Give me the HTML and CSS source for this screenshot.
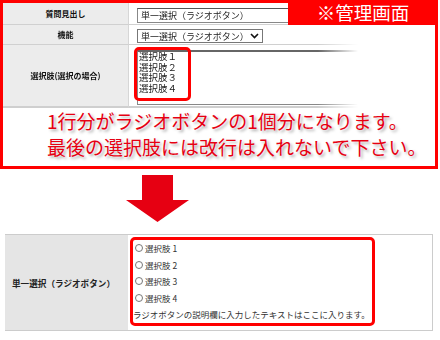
FILE: index.html
```html
<!DOCTYPE html>
<html lang="ja">
<head>
    <meta charset="UTF-8">
    <meta name="viewport" content="width=device-width, initial-scale=1.0">
    <title>単一選択（ラジオボタン）</title>
    <link rel="stylesheet" href="styles.css">
</head>
<body>
    <div class="admin">
        <div class="form">
            <div class="label">質問見出し</div>
            <div class="field">
                <div class="input">単一選択（ラジオボタン）</div>
            </div>
            <div class="label">機能</div>
            <div class="field">
                <div class="select">
                    <span>単一選択（ラジオボタン）</span>
                    <svg width="9" height="6" viewBox="0 0 9 6"><path d="M1 1 L4.5 4.5 L8 1" fill="none" stroke="#111" stroke-width="1.6"/></svg>
                </div>
            </div>
            <div class="label last">選択肢(選択の場合)</div>
            <div class="field last">
                <div class="textarea">
                    選択肢１<br>選択肢２<br>選択肢３<br>選択肢４
                    <div class="mark"></div>
                </div>
            </div>
        </div>
        <div class="badge">※管理画面</div>
        <p class="note">1行分がラジオボタンの1個分になります。<br>最後の選択肢には改行は入れないで下さい。</p>
    </div>

    <svg class="arrow" width="63" height="47" viewBox="0 0 63 47">
        <polygon points="16,0 47,0 47,25 63,25 31.5,47 0,25 16,25" fill="#e60012"/>
    </svg>

    <div class="preview">
        <div class="preview-label">単一選択（ラジオボタン）</div>
        <div class="preview-field">
            <div class="choices">
                <div class="opt"><span class="radio"></span>選択肢 1</div>
                <div class="opt"><span class="radio"></span>選択肢 2</div>
                <div class="opt"><span class="radio"></span>選択肢 3</div>
                <div class="opt"><span class="radio"></span>選択肢 4</div>
                <div class="desc">ラジオボタンの説明欄に入力したテキストはここに入ります。</div>
            </div>
        </div>
    </div>
</body>
</html>
```

FILE: styles.css
```css
body {
    margin: 0;
    font-family: "Noto Sans CJK JP", sans-serif;
    background-color: #fff;
    color: #222;
}

.admin {
    position: relative;
    width: 432px;
    height: 163px;
    border: 3px solid #ff0000;
}

.form {
    display: grid;
    grid-template-columns: 126px 1fr;
    grid-template-rows: 22px 20px 63px;
    -webkit-mask-image: linear-gradient(to right, #000 315px, transparent 355px);
    mask-image: linear-gradient(to right, #000 315px, transparent 355px);
}

.form .label {
    display: flex;
    align-items: center;
    justify-content: center;
    background-color: #ececec;
    border-right: 1px solid #d6d6d6;
    border-bottom: 1px solid #d0d0d0;
    font-size: 8px;
    font-weight: bold;
    color: #111;
}

.form .field {
    padding-left: 8px;
    border-bottom: 1px solid #d0d0d0;
}

.form .last {
    border-bottom: 2px solid #cfcfcf;
}

.input {
    width: 300px;
    height: 15px;
    margin-top: 5px;
    box-sizing: border-box;
    border: 1px solid #888;
    border-top-color: #555;
    padding-left: 3px;
    font-size: 9px;
    line-height: 13px;
    white-space: nowrap;
    overflow: hidden;
}

.select {
    display: flex;
    align-items: center;
    justify-content: space-between;
    width: 126px;
    height: 14px;
    margin-top: 4px;
    box-sizing: border-box;
    border: 1px solid #777;
    padding: 0 3px 0 3px;
    font-size: 9px;
    white-space: nowrap;
}

.textarea {
    position: relative;
    width: 240px;
    height: 55px;
    margin-top: 5px;
    box-sizing: border-box;
    border: 1px solid #888;
    border-top: 2px solid #666;
    padding-left: 1px;
    font-family: "Liberation Sans", "Noto Sans CJK JP", sans-serif;
    font-size: 9.5px;
    line-height: 10.5px;
}

.mark {
    position: absolute;
    left: -4px;
    top: -5px;
    width: 57px;
    height: 54px;
    box-sizing: border-box;
    border: 3px solid #ff0000;
    border-radius: 5px;
}

.badge {
    position: absolute;
    top: -3px;
    right: -3px;
    width: 150px;
    height: 25px;
    background-color: #ff0000;
    color: #fff;
    font-size: 18.5px;
    line-height: 25px;
    text-align: center;
}

.note {
    margin: 0;
    padding-left: 44px;
    font-size: 19px;
    line-height: 26px;
    color: #e60012;
    text-shadow: 0 0 2px #fff, 2px 2px 3px rgba(0, 0, 0, 0.35);
}

.arrow {
    display: block;
    margin: 6px 0 0 126px;
}

.preview {
    display: grid;
    grid-template-columns: 123px 1fr;
    width: 428px;
    margin: 12px 0 0 5px;
    box-sizing: border-box;
    border-top: 1px solid #ccc;
    border-bottom: 1px solid #ccc;
    border-right: 1px solid #ccc;
}

.preview-label {
    display: flex;
    align-items: center;
    justify-content: center;
    padding-right: 6px;
    background-color: #e5e5e5;
    font-size: 8.6px;
    font-weight: bold;
    color: #222;
}

.preview-field {
    padding: 2px 0 4px 2px;
}

.choices {
    width: 245px;
    height: 89px;
    box-sizing: border-box;
    border: 3px solid #ff0000;
    border-radius: 5px;
}

.opt {
    display: flex;
    align-items: center;
    height: 16.5px;
    padding-left: 2px;
    font-size: 8.5px;
    color: #333;
}

.radio {
    width: 8px;
    height: 8px;
    margin-right: 2px;
    box-sizing: border-box;
    border: 1px solid #777;
    border-radius: 50%;
}

.desc {
    font-size: 8.5px;
    line-height: 16.5px;
    color: #333;
    white-space: nowrap;
}
```
